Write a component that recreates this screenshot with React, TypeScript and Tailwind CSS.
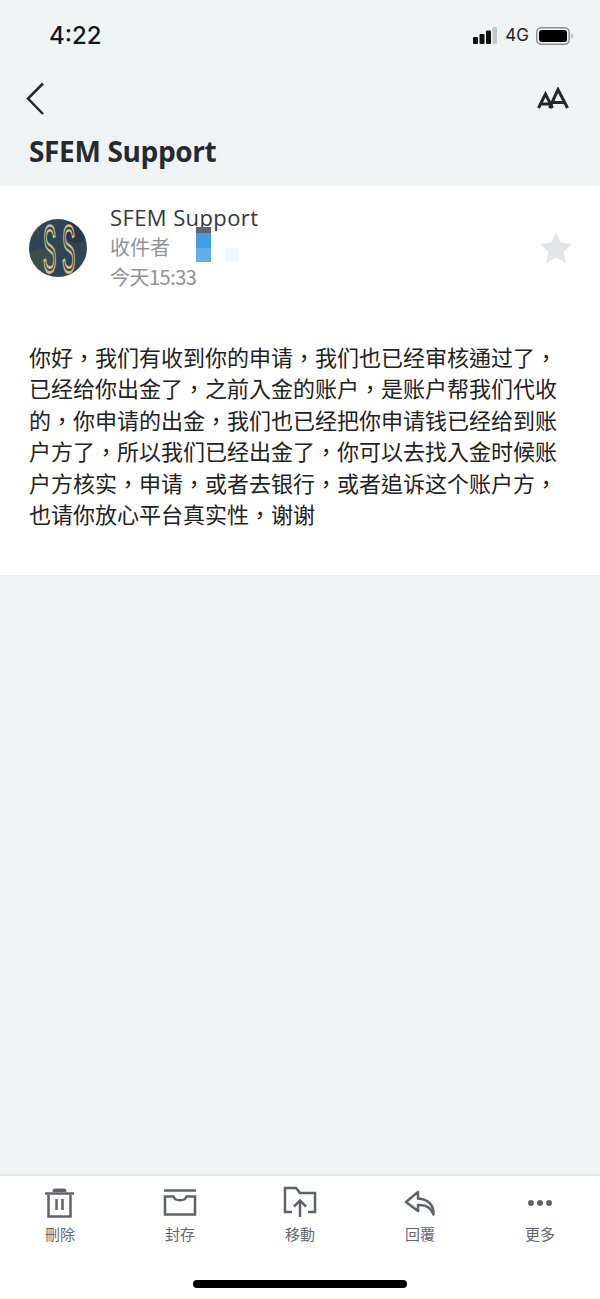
const bodyLines = [
  "你好，我们有收到你的申请，我们也已经审核通过了，",
  "已经给你出金了，之前入金的账户，是账户帮我们代收",
  "的，你申请的出金，我们也已经把你申请钱已经给到账",
  "户方了，所以我们已经出金了，你可以去找入金时候账",
  "户方核实，申请，或者去银行，或者追诉这个账户方，",
  "也请你放心平台真实性，谢谢",
];

const font = "font-['Noto_Sans_CJK_TC','Noto_Sans',sans-serif]";

function TrashIcon() {
  return (
    <svg width="32" height="32" viewBox="0 0 32 32" fill="none" stroke="#5f6368">
      <path d="M1 6.500h29" strokeWidth="2.500" />
      <path d="M9 4.500c0-2 .5-2.500 2-2.500h9c1.500 0 2 .5 2 2.500z" fill="#5f6368" strokeWidth="1" />
      <path d="M4.500 8v21.500h22V8" strokeWidth="2.500" />
      <path d="M12.500 12v11M18.500 12v11" strokeWidth="2.500" />
    </svg>
  );
}

function ArchiveIcon() {
  return (
    <svg width="34" height="32" viewBox="0 0 34 32" fill="none" stroke="#5f6368" strokeWidth="2.500">
      <path d="M1 3.500h32" />
      <path d="M2 9.500h8.500c1.500 5 11.500 5 13 0H32v18H2z" />
    </svg>
  );
}

function MoveIcon() {
  return (
    <svg width="34" height="34" viewBox="0 0 34 34" fill="none" stroke="#5f6368" strokeWidth="2.500">
      <path d="M9 26H2V2h11l4 5h15v19h-7" />
      <path d="M17 31V15M11 20.500l6-6 6 6" />
    </svg>
  );
}

function ReplyIcon() {
  return (
    <svg width="32" height="26" viewBox="0 0 32 26" fill="none" stroke="#5f6368" strokeWidth="2.500">
      <path d="M14 2 2 12l12 9v-6c7-.5 13 2.500 15.500 9.500C30 15 24 9 14 8.500z" strokeLinejoin="round" />
    </svg>
  );
}

function MoreIcon() {
  return (
    <svg width="26" height="8" viewBox="0 0 26 8" fill="#5f6368">
      <circle cx="4" cy="4" r="3" />
      <circle cx="13" cy="4" r="3" />
      <circle cx="22" cy="4" r="3" />
    </svg>
  );
}

const actions = [
  { label: "刪除", icon: <TrashIcon /> },
  { label: "封存", icon: <ArchiveIcon /> },
  { label: "移動", icon: <MoveIcon /> },
  { label: "回覆", icon: <ReplyIcon /> },
  { label: "更多", icon: <MoreIcon /> },
];

export default function App() {
  return (
    <div className={`w-[600px] h-[1299px] bg-[#eff3f4] flex flex-col overflow-hidden ${font}`}>
      {/* status bar */}
      <div className="h-[70px] shrink-0 flex items-center justify-between pl-[49px] pr-[26px] pt-[1px]">
        <span className="font-['Inter',sans-serif] text-[24px] font-medium text-[#15181b]">4:22</span>
        <div className="flex items-center">
          <svg width="24" height="18" viewBox="0 0 24 18" className="mr-[8px]">
            <rect x="0" y="10" width="5" height="7" rx="1" fill="#111" />
            <rect x="6.500" y="7" width="5" height="10" rx="1" fill="#111" />
            <rect x="13" y="3.500" width="5" height="13.500" rx="1" fill="#111" />
            <rect x="19.500" y="0" width="4.500" height="17" rx="1" fill="#c4c7c9" />
          </svg>
          <span className="font-['Inter',sans-serif] text-[17px] text-[#222] mr-[7px]">4G</span>
          <svg width="38" height="18" viewBox="0 0 38 18">
            <rect x="0.750" y="0.750" width="32.500" height="16.500" rx="4.500" fill="none" stroke="#8b8e90" strokeWidth="1.500" />
            <rect x="3" y="3" width="28" height="12" rx="2.500" fill="#000" />
            <path d="M35.500 6.500c1.500.5 1.500 4.500 0 5z" fill="#8b8e90" />
          </svg>
        </div>
      </div>

      {/* nav */}
      <div className="h-[56px] shrink-0 flex items-center justify-between pl-[26px] pr-[31px] pt-[2px]">
        <svg width="20" height="34" viewBox="0 0 20 34" fill="none" stroke="#23282d" strokeWidth="2.500">
          <path d="M17 1.500 2 16.500l15 15.500" />
        </svg>
        <svg width="32" height="24" viewBox="0 0 32 24" fill="none" stroke="#23282d" strokeWidth="3">
          <path d="M1.500 21 8.500 7 15.500 21M4 17h9" />
          <path d="M12.500 21 21 2.500 30.500 21M16 15.500h11" />
        </svg>
      </div>
      <div className="h-[60px] shrink-0 pl-[29px] pt-[6px]">
        <h1 className="font-['Open_Sans',sans-serif] font-bold text-[28px] leading-[38px] tracking-[-0.35px] text-[#252a30]">
          SFEM Support
        </h1>
      </div>

      {/* message card */}
      <div className="h-[390px] shrink-0 bg-white border-b border-[#e8ecee] relative">
        <div className="flex items-center pt-[17px] pl-[29px] pr-[27px]">
          <div className="w-[58px] h-[58px] shrink-0">
            <svg width="58" height="58" viewBox="0 0 58 58" className="overflow-visible">
              <clipPath id="avatar-clip">
                <circle cx="29" cy="29" r="29" />
              </clipPath>
              <g clipPath="url(#avatar-clip)">
                <rect width="58" height="58" fill="#2f4554" />
                <circle cx="12" cy="44" r="14" fill="#3c4f4a" />
                <circle cx="48" cy="12" r="12" fill="#27384c" />
              </g>
              <g transform="scale(1 3.300)" fontFamily="Liberation Sans, sans-serif" fontSize="20" fill="none" stroke="#d2c084" strokeWidth="0.800">
                <text x="14" y="16">S</text>
                <text x="33" y="16">S</text>
              </g>
            </svg>
          </div>
          <div className="ml-[23px] flex-1">
            <div className="font-['Open_Sans',sans-serif] text-[22px] leading-[29px] tracking-[0.4px] text-[#33383d]">SFEM Support</div>
            <div className="text-[20px] leading-[30px] text-[#8f9499]">收件者</div>
            <div className="text-[20px] leading-[30px] text-[#8f9499] tracking-[-0.5px]">今天15:33</div>
          </div>
          <svg width="34" height="32" viewBox="0 0 34 32" className="-mt-[1px]">
            <path d="M17 1l4.800 10.600 11.200 1.300-8.300 7.700 2.200 11.400L17 26.400 7.100 32l2.200-11.400L1 12.900l11.200-1.300z" fill="#e2e4e8" />
          </svg>
        </div>
        {/* censored recipient */}
        <div className="absolute left-[196px] top-[41px] w-[15px] flex flex-col">
          <div className="h-[6px] bg-[#5b6670]" />
          <div className="h-[15px] bg-[#3f9fe6]" />
          <div className="h-[14px] bg-[#62aee8]" />
        </div>
        <div className="absolute left-[225px] top-[40px] w-[14px] h-[6px] bg-[#f7f9fa]" />
        <div className="absolute left-[225px] top-[62px] w-[14px] h-[14px] bg-[#f1f8fc]" />

        <div className="mt-[49px] pl-[29px] text-[22px] leading-[31.400px] text-[#222222] whitespace-nowrap">
          {bodyLines.map((line) => (
            <div key={line}>{line}</div>
          ))}
        </div>
      </div>

      <div className="flex-1" />

      {/* bottom toolbar */}
      <div className="h-[125px] shrink-0 bg-white border-t-2 border-[#e6e9eb] relative">
        <div className="grid grid-cols-5">
          {actions.map((a) => (
            <div key={a.label} className="flex flex-col items-center">
              <div className="h-[42px] mt-[6px] flex items-center justify-center">{a.icon}</div>
              <span className="text-[15px] leading-[20px] text-[#63676c]">{a.label}</span>
            </div>
          ))}
        </div>
        <div className="absolute left-[193px] bottom-[11px] w-[214px] h-[8px] rounded-full bg-black" />
      </div>
    </div>
  );
}
